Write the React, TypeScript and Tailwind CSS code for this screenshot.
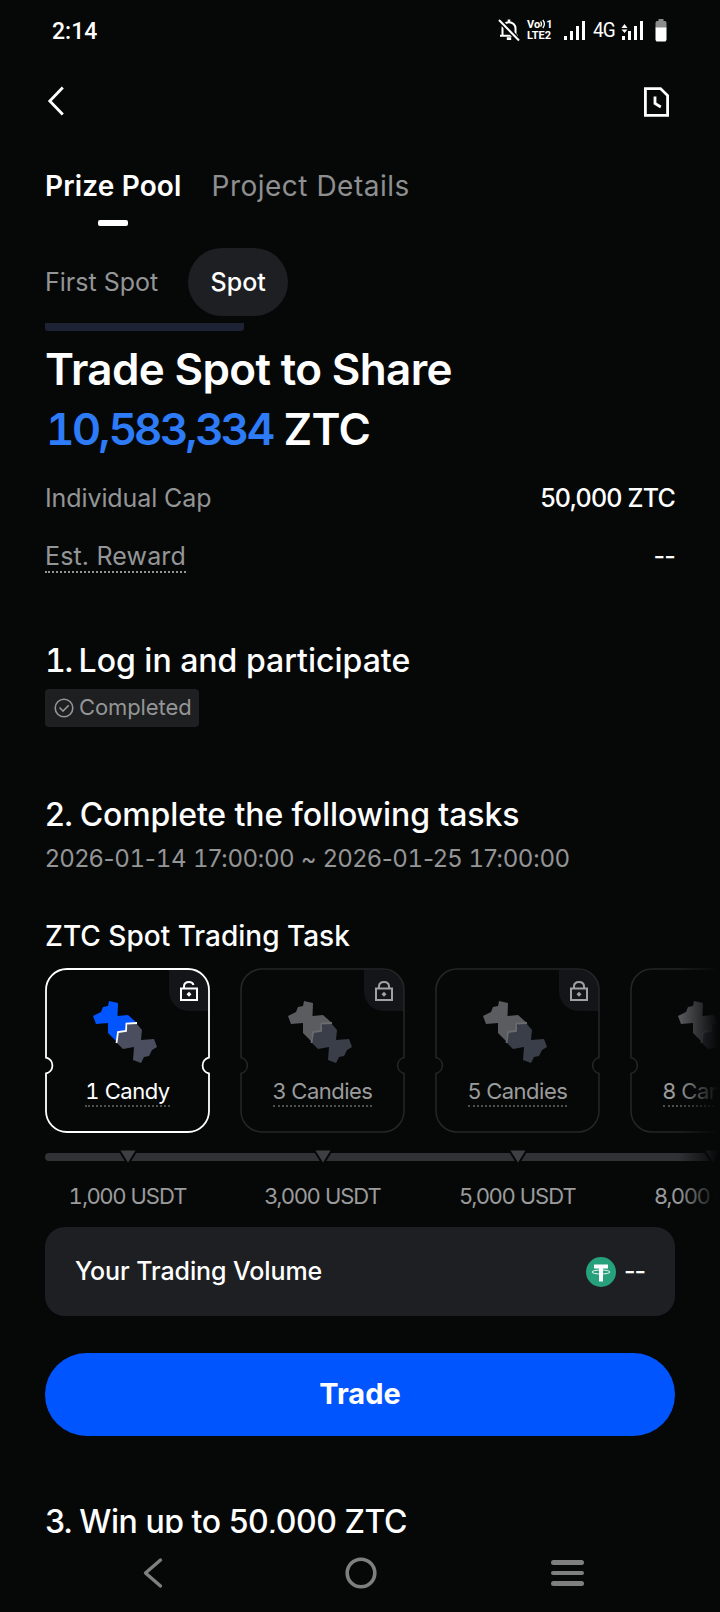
import { Fragment, ReactNode } from "react";
import clsx from "clsx";

type Task = {
  label: string;
  volume: string;
  unlocked?: boolean;
};

const tasks: Task[] = [
  { label: "1 Candy", volume: "1,000 USDT", unlocked: true },
  { label: "3 Candies", volume: "3,000 USDT" },
  { label: "5 Candies", volume: "5,000 USDT" },
  { label: "8 Candies", volume: "8,000 USDT" },
];

/* Only the tabular figure "1" has a foot, the other glyphs stay proportional */
const Digits = ({ children }: { children: string }) => (
  <>
    {children.split(/(1)/).map((part, i) =>
      part === "1" ? (
        <span key={i} className="tabular-nums">
          1
        </span>
      ) : (
        <Fragment key={i}>{part}</Fragment>
      )
    )}
  </>
);

const Signal = ({ className }: { className?: string }) => (
  <svg className={className} width="22" height="20" viewBox="0 0 22 20" fill="#fff">
    <rect x="0" y="16" width="3" height="4" />
    <rect x="6" y="11" width="3" height="9" />
    <rect x="12" y="6" width="3" height="14" />
    <rect x="18" y="1" width="3" height="19" />
  </svg>
);

const StatusBar = () => (
  <div className="flex h-[60px] items-center justify-between pl-[52px] pr-[53px] font-['Roboto',sans-serif] text-white">
    <div className="pt-[2px] text-[23px] leading-none font-medium">2:14</div>
    <div className="flex items-center">
      <svg width="22" height="24" viewBox="0 0 22 24" fill="none" stroke="#fff" strokeWidth="2">
        <path d="M4.5 17.5V10.5C4.5 7 7.3 4.3 11 4.3S17.500 7 17.500 10.500V17.500M2 17.700H20" />
        <path d="M11 4V1.500M8.800 20.600H13.200" strokeWidth="2.600" />
        <path d="M1 2L21 22.500" stroke="#060808" strokeWidth="5" />
        <path d="M1 2L21 22.500" />
      </svg>
      <div className="ml-[7px] w-[26px] text-[11px] leading-[11px] font-bold whitespace-nowrap">
        <div className="flex">
          Vo
          <svg width="6" height="10" viewBox="0 0 6 10" fill="none" stroke="#fff" strokeWidth="1.300">
            <path d="M0.500 2.500Q2.500 5 0.500 7.500M2.800 1Q6 5 2.800 9" />
          </svg>
          1
        </div>
        <div>LTE2</div>
      </div>
      <Signal className="ml-[11px]" />
      <span className="ml-[7px] w-[22px] text-[20px] leading-none tracking-[-1px] scale-x-[0.95] origin-left">4G</span>
      <svg className="ml-[6px]" width="23" height="20" viewBox="0 0 23 20" fill="#fff">
        <path d="M3.500 4L6.500 8H0.500ZM3.500 13L0.500 9.500H6.500Z" />
        <rect x="1" y="16" width="3" height="4" />
        <rect x="7" y="11" width="3" height="9" />
        <rect x="13" y="6" width="3" height="14" />
        <rect x="19" y="1" width="3" height="19" />
      </svg>
      <svg className="ml-[11px]" width="12" height="24" viewBox="0 0 12 24">
        <path d="M3.500 1H8.500V3H10.500L11.500 4.500V10H0.500V4.500L1.500 3H3.500Z" fill="#8b8b8b" />
        <path d="M0.500 9.500H11.500V22L10.500 23.500H1.500L0.500 22Z" fill="#fff" />
      </svg>
    </div>
  </div>
);

const Header = () => (
  <div className="flex h-[82px] items-center justify-between pl-[47px] pr-[50px]">
    <svg width="18" height="30" viewBox="0 0 18 30" fill="none" stroke="#fff" strokeWidth="2.800">
      <path d="M15.800 1.500L2.800 15L15.800 28.500" />
    </svg>
    <svg className="mt-[2px]" width="27" height="30" viewBox="0 0 27 30" fill="none" stroke="#fff" strokeWidth="2.800">
      <path d="M2.400 1.600H17.500L24.600 8.500V28.400H2.400Z" />
      <path d="M12 9.500V16.500L17.800 20" />
    </svg>
  </div>
);

const Candy = ({ unlocked }: { unlocked?: boolean }) => (
  <svg className="mt-[30px] ml-[47px]" width="66" height="66" viewBox="0 0 66 66">
    <path
      d="M17 3L26 5L25.500 18L36 17L45 25L34 25V33H26L24 43L16 35V25L4 26L1 18L9 14L11 9L16 8Z"
      fill={unlocked ? "#0055ff" : "#5b5c5f"}
    />
    <path
      d="M36 26L44 25L50 32L49 42L62 41L65 49L60 52L57 58L52 59L49 65L41 62L42 49L31 51L24 44L26 34L34 33Z"
      fill={unlocked ? "#4a4e5e" : "#393e49"}
    />
    <path d="M24.500 45L26 34L34 33L34.500 25.500L45 25" fill="none" stroke={unlocked ? "#fff" : "#6b6c6f"} strokeWidth="1.800" />
  </svg>
);

const Lock = ({ unlocked }: { unlocked?: boolean }) => (
  <svg width="20" height="22" viewBox="0 0 20 22" fill="none" stroke={unlocked ? "#fff" : "#a0a1a2"} strokeWidth="2">
    <path d="M2 8.500H18V20H2Z" />
    <path d={unlocked ? "M5 8V6.500C5 3.600 7 2 10 2C12.500 2 14 3.200 14.500 5" : "M5 8V6.500C5 3.600 7 2 10 2S15 3.600 15 6.500V8"} />
    <path d="M10 11.800L12.500 14.300L10 16.800L7.500 14.300Z" fill={unlocked ? "#fff" : "#a0a1a2"} stroke="none" />
  </svg>
);

const TaskCard = ({ label, unlocked }: Task) => (
  <div className="relative h-[165px] w-[165px] shrink-0">
    <div className="absolute top-[2px] right-[1px] flex h-[41px] w-10 items-center justify-center rounded-tr-[20px] rounded-bl-[20px] bg-[#141518]">
      <Lock unlocked={unlocked} />
    </div>
    {/* ticket outline with a notch on each side */}
    <svg
      className="absolute inset-0"
      width="165"
      height="165"
      viewBox="0 0 165 165"
      fill="none"
      stroke={unlocked ? "#fff" : "#242527"}
      strokeWidth={unlocked ? 1.8 : 1.6}
    >
      <path d="M22 1H143A21 21 0 0 1 164 22V89.500A8.200 8.200 0 0 0 164 105.500V143A21 21 0 0 1 143 164H22A21 21 0 0 1 1 143V105.500A8.200 8.200 0 0 0 1 89.500V22A21 21 0 0 1 22 1Z" />
    </svg>
    <div className="flow-root">
      <Candy unlocked={unlocked} />
      <div className="mt-[13px] flex justify-center">
        <span
          className={clsx(
            "border-b-2 border-dotted border-[#4d4e50] text-[22px] leading-[28px] tracking-[-0.5px] whitespace-nowrap",
            unlocked ? "text-white" : "text-[#9b9b9c]"
          )}
        >
          <Digits>{label}</Digits>
        </span>
      </div>
    </div>
  </div>
);

const TaskList = () => (
  <div className="relative mt-3 -mr-[45px] overflow-hidden">
    <div className="flex gap-[30px]">
      {tasks.map((task) => (
        <TaskCard key={task.label} {...task} />
      ))}
    </div>
    <div className="mt-5 flex h-2 w-[900px] rounded-full bg-[#313235]">
      {tasks.map((task) => (
        <div key={task.label} className="mr-[30px] flex w-[165px] shrink-0 justify-center">
          <svg className="-mt-[5px]" width="24" height="20" viewBox="0 0 24 20">
            <path
              d="M4.500 2.500H19.500L12 14.500Z"
              fill="#3e3f42"
              stroke="#060808"
              strokeWidth="4"
              strokeLinejoin="round"
              paintOrder="stroke"
            />
          </svg>
        </div>
      ))}
    </div>
    <div className="mt-[15px] flex gap-[30px]">
      {tasks.map((task) => (
        <div
          key={task.label}
          className="w-[165px] shrink-0 text-center text-[22px] leading-10 tracking-[-1px] text-[#9b9b9c]"
        >
          <Digits>{task.volume}</Digits>
        </div>
      ))}
    </div>
    <div className="absolute inset-y-0 right-0 w-[42px] bg-linear-to-r from-[#060808]/0 to-[#060808] to-95%" />
  </div>
);

const InfoRow = ({ label, children }: { label: ReactNode; children: ReactNode }) => (
  <div className="flex h-[58px] items-center justify-between text-[25px] leading-[30px]">
    <span className="text-[#949596]">{label}</span>
    <span className="font-medium tracking-[-0.8px]">{children}</span>
  </div>
);

const Tether = () => (
  <svg width="30" height="30" viewBox="0 0 30 30">
    <circle cx="15" cy="15" r="15" fill="#26a17b" />
    <path d="M8 7.500H22V11.500H17V24.500H13V11.500H8Z" fill="#fff" />
    <ellipse cx="15" cy="15" rx="9" ry="2" fill="none" stroke="#fff" strokeWidth="0.900" />
  </svg>
);

const NavBar = () => (
  <div className="flex h-[79px] items-center justify-between pl-[142px] pr-[136px]">
    <svg
      width="22"
      height="32"
      viewBox="0 0 22 32"
      fill="none"
      stroke="#7f7f7f"
      strokeWidth="3.400"
      strokeLinecap="round"
      strokeLinejoin="round"
    >
      <path d="M18.500 3L3.500 16L18.500 29" />
    </svg>
    <svg className="ml-[7px]" width="32" height="32" viewBox="0 0 32 32" fill="none" stroke="#7f7f7f" strokeWidth="3.600">
      <circle cx="16" cy="16" r="13.800" />
    </svg>
    <div className="flex flex-col gap-[6px] pt-[1px]">
      <span className="h-[4.500px] w-[33px] rounded-full bg-[#7f7f7f]" />
      <span className="h-[4.500px] w-[33px] rounded-full bg-[#7f7f7f]" />
      <span className="h-[4.500px] w-[33px] rounded-full bg-[#7f7f7f]" />
    </div>
  </div>
);

export default function App() {
  return (
    <div className="h-[1612px] w-[720px] overflow-hidden bg-[#060808] font-['Inter',sans-serif] text-white">
      <StatusBar />
      <Header />

      <main className="h-[1391px] overflow-hidden px-[45px]">
        <div className="mt-6 flex gap-[30px] text-[28px] leading-10 whitespace-nowrap">
          <div className="flex flex-col items-center">
            <span className="font-semibold tracking-[0.15px]">Prize Pool</span>
            <span className="mt-[14px] h-[6px] w-[30px] rounded-[2px] bg-white" />
          </div>
          <span className="tracking-[0.5px] text-[#8e8f90]">Project Details</span>
        </div>

        <div className="mt-[22px] flex h-[68px] items-center gap-[30px] text-[25px]">
          <span className="pt-[2px] text-[#949596]">First Spot</span>
          <span className="flex h-[68px] w-[100px] items-center justify-center rounded-full bg-[#1e1f23] pt-[1px] font-medium">
            Spot
          </span>
        </div>
        <div className="mt-[7px] h-2 w-[199px] rounded-b-[3px] bg-[#1e2235]" />

        <h1 className="mt-2 text-[44px] leading-[60px] font-semibold tracking-[-0.65px] whitespace-nowrap">
          Trade Spot to Share
          <br />
          <span className="ml-[1px] tracking-[-2.4px] text-[#2d7bf6]">
            <Digits>10,583,334</Digits>
          </span>{" "}
          ZTC
        </h1>

        <div className="mt-[10px]">
          <InfoRow label={<span className="tracking-[-0.1px]">Individual Cap</span>}>50,000 ZTC</InfoRow>
          <InfoRow
            label={
              <span className="mt-[2px] inline-block border-b-2 border-dotted border-[#949596] tracking-[0.15px]">
                Est. Reward
              </span>
            }
          >
            --
          </InfoRow>
        </div>

        <h2 className="mt-[52px] text-[32px] leading-[48px] font-medium">
          <span className="tracking-[-1.7px]">
            <Digits>1. </Digits>
          </span>
          Log in and participate
        </h2>
        <div className="mt-[4px] flex h-[38px] w-[154px] items-center gap-[5px] rounded-[4px] bg-[#1e1f20] pl-[9px] text-[22px] text-[#949596]">
          <svg width="20" height="20" viewBox="0 0 20 20" fill="none" stroke="#949596" strokeWidth="1.600">
            <circle cx="10" cy="10" r="8.800" />
            <path d="M5.500 9.500L9 13L14.800 7.200" />
          </svg>
          <span className="pb-[2px] tracking-[-0.1px]">Completed</span>
        </div>

        <h2 className="mt-[64px] text-[32px] leading-[48px] font-medium">
          <span className="tracking-[-1px]">2. </span>
          <span className="tracking-[-0.1px]">Complete the following tasks</span>
        </h2>
        <div className="text-[24px] leading-10 tracking-[-0.18px] text-[#949596]">
          <Digits>2026-01-14 17:00:00 ~ 2026-01-25 17:00:00</Digits>
        </div>

        <h3 className="mt-[37px] text-[28px] leading-10 font-medium">ZTC Spot Trading Task</h3>
        <TaskList />

        <div className="mt-[11px] flex h-[89px] items-center justify-between rounded-[20px] bg-[#1e1f23] px-[30px] text-[25px] font-medium tracking-[-0.1px]">
          Your Trading Volume
          <span className="flex items-center gap-2">
            <Tether />
            <span className="tracking-[-1px]">--</span>
          </span>
        </div>

        <button className="mt-[37px] h-[83px] w-full rounded-full bg-[#0055ff] pb-[2px] text-[29px] font-bold">Trade</button>

        <h2 className="mt-[61px] text-[32px] leading-[50px] font-medium tracking-[-0.45px]">
          <span className="tracking-[-1px]">3. </span>
          Win up to 50,000 ZTC
        </h2>
      </main>

      <NavBar />
    </div>
  );
}
